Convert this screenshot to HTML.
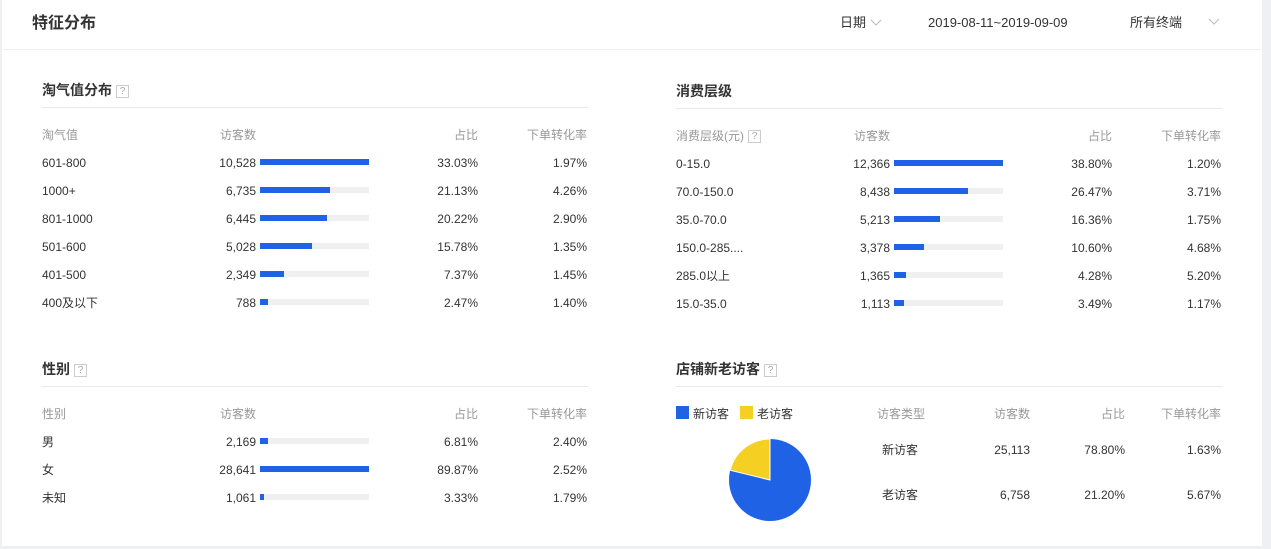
<!DOCTYPE html>
<html><head><meta charset="utf-8"><style>
*{margin:0;padding:0;box-sizing:border-box}
body{width:1271px;height:549px;background:#eef0f3;font-family:"Liberation Sans","Noto Sans CJK SC",sans-serif;color:#333;font-size:12px;position:relative;overflow:hidden}
.card{position:absolute;left:2px;top:0;width:1260px;height:546px;background:#fff}
.a{position:absolute;white-space:nowrap;line-height:14px}
.r{text-align:right}
.h{color:#999}
.t{font-size:14px;font-weight:bold;color:#333}
.q{display:inline-block;width:13px;height:13px;border:1px solid #ccc;color:#aaa;font-size:10px;line-height:11px;text-align:center;font-weight:normal;vertical-align:1px;margin-left:4px}
.ln{position:absolute;height:1px;background:#e8e8e8}
.trk{position:absolute;height:6px;width:109px;background:#f0f0f0}
.trk i{display:block;height:6px;background:#1f62e6}
</style></head><body>
<div class="card"></div>
<div class="a" style="left:32px;top:14px;font-size:16px;font-weight:bold;line-height:20px">特征分布</div>
<div class="a" style="left:840px;top:16px;font-size:13px">日期</div>
<div class="a" style="left:928px;top:16px;font-size:13px">2019-08-11~2019-09-09</div>
<div class="a" style="left:1130px;top:16px;font-size:13px">所有终端</div>
<div id="c"></div>
<svg style="position:absolute;left:0;top:0" width="1271" height="549">
<path d="M871 20 L876 25 L881 20" fill="none" stroke="#bbb" stroke-width="1"/>
<path d="M1209 19 L1214 24 L1219 19" fill="none" stroke="#bbb" stroke-width="1"/>
<circle cx="770" cy="480" r="41" fill="#1f62e6"/>
<path d="M770 480 L730.2 470.3 A41 41 0 0 1 770 439 Z" fill="#f5cf21" stroke="#fff" stroke-width="1"/>
</svg>
<div class="ln" style="left:2px;top:49px;width:1260px;background:#eee"></div>
<script>
var c=document.getElementById('c'),h='';
function A(x,y,t,cls,right){h+='<div class="a '+(cls||'')+(right?' r':'')+'" style="'+(right?'left:'+(x-150)+'px;width:150px':'left:'+x+'px')+';top:'+(y-6)+'px">'+t+'</div>';}
function sec(x0,y0,title,hdr,rows,max){
A(x0,y0,title,'t');
h+='<div class="ln" style="left:'+x0+'px;top:'+(y0+18)+'px;width:546px"></div>';
A(x0,y0+45,hdr,'h');A(x0+178,y0+45,'访客数','h');A(x0+436,y0+45,'占比','h',1);A(x0+545,y0+45,'下单转化率','h',1);
rows.forEach(function(r,i){var y=y0+73+i*28;A(x0,y,r[0]);A(x0+214,y,r[1],'',1);
var v=+r[1].replace(',','');h+='<div class="trk" style="left:'+(x0+218)+'px;top:'+(y-3)+'px"><i style="width:'+Math.max(4,Math.round(109*v/max))+'px"></i></div>';
A(x0+436,y,r[2],'',1);A(x0+545,y,r[3],'',1);});}
sec(42,89,'淘气值分布<span class="q">?</span>','淘气值',[['601-800','10,528','33.03%','1.97%'],['1000+','6,735','21.13%','4.26%'],['801-1000','6,445','20.22%','2.90%'],['501-600','5,028','15.78%','1.35%'],['401-500','2,349','7.37%','1.45%'],['400及以下','788','2.47%','1.40%']],10528);
sec(676,90,'消费层级','消费层级(元)<span class="q">?</span>',[['0-15.0','12,366','38.80%','1.20%'],['70.0-150.0','8,438','26.47%','3.71%'],['35.0-70.0','5,213','16.36%','1.75%'],['150.0-285....','3,378','10.60%','4.68%'],['285.0以上','1,365','4.28%','5.20%'],['15.0-35.0','1,113','3.49%','1.17%']],12366);
sec(42,368,'性别<span class="q">?</span>','性别',[['男','2,169','6.81%','2.40%'],['女','28,641','89.87%','2.52%'],['未知','1,061','3.33%','1.79%']],28641);
A(676,368,'店铺新老访客<span class="q">?</span>','t');
h+='<div class="ln" style="left:676px;top:386px;width:546px"></div>';
h+='<div style="position:absolute;left:676px;top:406px;width:13px;height:13px;background:#1f62e6"></div>';
A(693,413,'新访客');
h+='<div style="position:absolute;left:740px;top:406px;width:13px;height:13px;background:#f5cf21"></div>';
A(757,413,'老访客');
A(877,413,'访客类型','h');A(1030,413,'访客数','h',1);A(1125,413,'占比','h',1);A(1221,413,'下单转化率','h',1);
A(882,449,'新访客');A(1030,449,'25,113','',1);A(1125,449,'78.80%','',1);A(1221,449,'1.63%','',1);
A(882,494,'老访客');A(1030,494,'6,758','',1);A(1125,494,'21.20%','',1);A(1221,494,'5.67%','',1);
c.innerHTML=h;
</script>
</body></html>
